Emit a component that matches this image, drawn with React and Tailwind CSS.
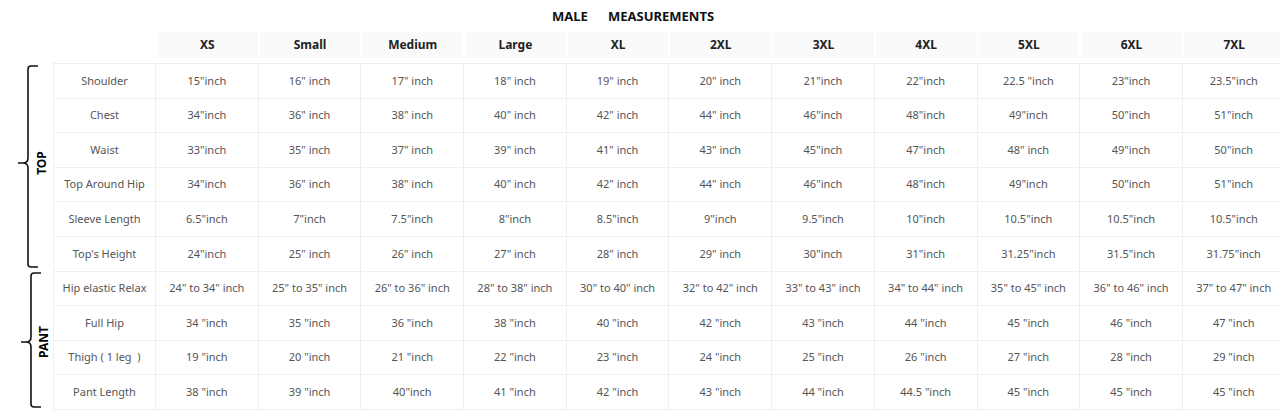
import React from "react";

const sizes = ["XS", "Small", "Medium", "Large", "XL", "2XL", "3XL", "4XL", "5XL", "6XL", "7XL"];

const rows = [
  ["Shoulder", "15\"inch", "16\" inch", "17\" inch", "18\" inch", "19\" inch", "20\" inch", "21\"inch", "22\"inch", "22.5 \"inch", "23\"inch", "23.5\"inch"],
  ["Chest", "34\"inch", "36\" inch", "38\" inch", "40\" inch", "42\" inch", "44\" inch", "46\"inch", "48\"inch", "49\"inch", "50\"inch", "51\"inch"],
  ["Waist", "33\"inch", "35\" inch", "37\" inch", "39\" inch", "41\" inch", "43\" inch", "45\"inch", "47\"inch", "48\" inch", "49\"inch", "50\"inch"],
  ["Top Around Hip", "34\"inch", "36\" inch", "38\" inch", "40\" inch", "42\" inch", "44\" inch", "46\"inch", "48\"inch", "49\"inch", "50\"inch", "51\"inch"],
  ["Sleeve Length", "6.5\"inch", "7\"inch", "7.5\"inch", "8\"inch", "8.5\"inch", "9\"inch", "9.5\"inch", "10\"inch", "10.5\"inch", "10.5\"inch", "10.5\"inch"],
  ["Top's Height", "24\"inch", "25\" inch", "26\" inch", "27\" inch", "28\" inch", "29\" inch", "30\"inch", "31\"inch", "31.25\"inch", "31.5\"inch", "31.75\"inch"],
  ["Hip elastic Relax", "24\" to 34\" inch", "25\" to 35\" inch", "26\" to 36\" inch", "28\" to 38\" inch", "30\" to 40\" inch", "32\" to 42\" inch", "33\" to 43\" inch", "34\" to 44\" inch", "35\" to 45\" inch", "36\" to 46\" inch", "37\" to 47\" inch"],
  ["Full Hip", "34 \"inch", "35 \"inch", "36 \"inch", "38 \"inch", "40 \"inch", "42 \"inch", "43 \"inch", "44 \"inch", "45 \"inch", "46 \"inch", "47 \"inch"],
  ["Thigh ( 1 leg  )", "19 \"inch", "20 \"inch", "21 \"inch", "22 \"inch", "23 \"inch", "24 \"inch", "25 \"inch", "26 \"inch", "27 \"inch", "28 \"inch", "29 \"inch"],
  ["Pant Length", "38 \"inch", "39 \"inch", "40\"inch", "41 \"inch", "42 \"inch", "43 \"inch", "44 \"inch", "44.5 \"inch", "45 \"inch", "45 \"inch", "45 \"inch"],
];

const cols = "grid grid-cols-[102px_repeat(11,102.7px)]";

const Bracket = ({ h, x, tip, label, labelX }) => (
  <div className="relative w-[53px]" style={{ height: h }}>
    <svg width="53" height={h + 4} className="absolute left-0 top-0 overflow-visible">
      <path
        d={`M${x + 10},3 H${x + 3} Q${x},3 ${x},6 V${tip - 5} Q${x},${tip} ${x - 5},${tip} H${x - 10} M${x - 5},${tip} Q${x},${tip} ${x},${tip + 5} V${h - 6} Q${x},${h - 3} ${x + 3},${h - 3} H${x + 10}`}
        fill="none"
        stroke="#111"
        strokeWidth="1.6"
      />
    </svg>
    <div
      className="absolute text-[12px] font-bold text-black leading-none whitespace-nowrap"
      style={{ left: labelX, top: tip, transform: "translate(-50%, -50%) rotate(-90deg)" }}
    >
      {label}
    </div>
  </div>
);

export default function App() {
  return (
    <div className="w-[1280px] h-[414px] overflow-hidden bg-white font-['Noto_Sans','Open_Sans',sans-serif]">
      <div className="h-[32px] flex items-center justify-center pr-[14px] pt-[2px]">
        <span className="text-[13px] font-bold text-[#111] whitespace-pre">MALE      MEASUREMENTS</span>
      </div>
      <div className="flex">
        <div className="w-[53px] shrink-0 pt-[31px]">
          <Bracket h={207} x={28} tip={100} label="TOP" labelX={42} />
          <Bracket h={140} x={31} tip={72} label="PANT" labelX={44} />
        </div>
        <div className="shrink-0">
          <div className={`${cols} h-[31px]`}>
            <div />
            {sizes.map((s) => (
              <div key={s} className="h-[26px] bg-[#fafafa] border-l-2 border-white flex items-center justify-center text-[12px] font-bold text-[#222]">
                {s}
              </div>
            ))}
          </div>
          <div className="border-t border-l border-[#efefef]">
            {rows.map((r) => (
              <div key={r[0]} className={`${cols} h-[34.6px] border-b border-[#efefef]`}>
                {r.map((c, i) => (
                  <div key={i} className="flex items-center justify-center border-r border-[#efefef] text-[11px] text-[#555] whitespace-pre">
                    {c}
                  </div>
                ))}
              </div>
            ))}
          </div>
        </div>
      </div>
    </div>
  );
}
